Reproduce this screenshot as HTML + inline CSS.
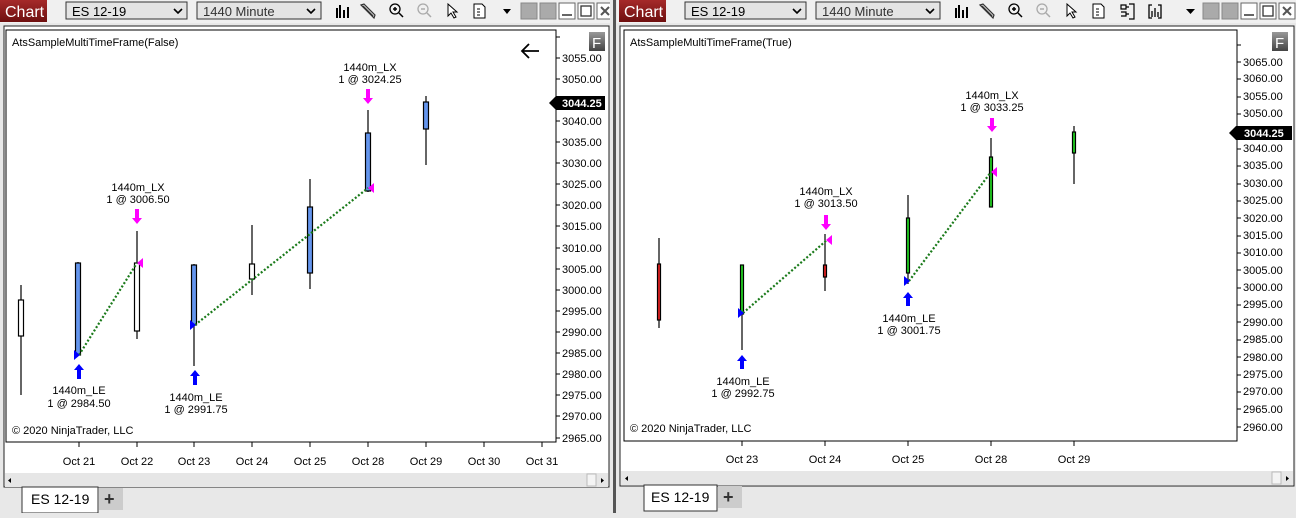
<!DOCTYPE html>
<html><head><meta charset="utf-8"><style>
body{margin:0;width:1296px;height:513px;overflow:hidden;background:#e8e8e8;font-family:"Liberation Sans",sans-serif}
svg text{font-family:"Liberation Sans",sans-serif}
</style></head><body>
<svg width="1296" height="513" viewBox="0 0 1296 513" xmlns="http://www.w3.org/2000/svg">
<defs>
<linearGradient id="red" x1="0" y1="0" x2="0" y2="1"><stop offset="0" stop-color="#a52a2a"/><stop offset="1" stop-color="#6e0f0f"/></linearGradient>
<linearGradient id="fb" x1="0" y1="0" x2="0" y2="1"><stop offset="0" stop-color="#999"/><stop offset="1" stop-color="#444"/></linearGradient>
<g id="tb">
 <rect x="0" y="0" width="47" height="22" fill="url(#red)"/>
 <text x="5" y="17" font-size="16" fill="#fff">Chart</text>
 <rect x="66" y="2" width="121" height="17" fill="#e4e4e4" stroke="#333"/>
 <text x="72" y="16" font-size="13" fill="#000">ES 12-19</text>
 <path d="M174 9l4 4 4-4" stroke="#000" stroke-width="1.6" fill="none"/>
 <rect x="197" y="2" width="124" height="17" fill="#e4e4e4" stroke="#333"/>
 <text x="203" y="16" font-size="13" fill="#333">1440 Minute</text>
 <path d="M307 9l4 4 4-4" stroke="#000" stroke-width="1.6" fill="none"/>
 <path d="M337 8v10M340 5v13M344 10v8M348 7v11" stroke="#000" stroke-width="2"/>
 <path d="M363 6l10 10M361 5l3 -1 11 11-1 3z" stroke="#333" stroke-width="1.2" fill="#ccc"/>
 <circle cx="395" cy="9" r="5" fill="none" stroke="#000" stroke-width="1.3"/><path d="M393 9h4M395 7v4M399 13l4 4" stroke="#000" stroke-width="1.5"/>
 <circle cx="423" cy="9" r="5" fill="none" stroke="#aaa" stroke-width="1.3"/><path d="M421 9h4M427 13l4 4" stroke="#aaa" stroke-width="1.5"/>
 <path d="M448 4v12l3-3 3 5 2-1-3-5h4z" fill="#fff" stroke="#000"/>
 <path d="M474 4h8l3 3v11h-11z" fill="#fff" stroke="#000"/><path d="M477 9h3M477 12h3M477 15h3" stroke="#000"/>
</g>
<g id="wb">
 <rect x="0" y="3" width="16" height="16" fill="#aaa" stroke="#888"/>
 <rect x="19" y="3" width="16" height="16" fill="#aaa" stroke="#888"/>
 <rect x="38" y="3" width="16" height="16" fill="#fff" stroke="#666"/><path d="M41 15h10" stroke="#333" stroke-width="1.5"/>
 <rect x="57" y="3" width="16" height="16" fill="#fff" stroke="#666"/><rect x="60" y="6" width="10" height="10" fill="none" stroke="#333" stroke-width="1.3"/>
 <rect x="76" y="3" width="16" height="16" fill="#fff" stroke="#666"/><path d="M80 7l8 8M88 7l-8 8" stroke="#555" stroke-width="2"/>
</g>
</defs>
<rect x="0" y="0" width="1296" height="23" fill="#f0f0f0"/>

<!-- LEFT WINDOW -->
<use href="#tb"/>
<path d="M503 9h8l-4 5z" fill="#000"/>
<use href="#wb" x="521"/>
<rect x="610" y="0" width="7" height="513" fill="#e8e8e8"/>
<rect x="613" y="0" width="3" height="513" fill="#555"/>
<rect x="4" y="26" width="605" height="461" fill="#fff" stroke="#222"/>
<rect x="6" y="30" width="550" height="412" fill="#fff" stroke="#000"/>
<text x="12" y="46" font-size="11">AtsSampleMultiTimeFrame(False)</text>
<text x="12" y="434" font-size="11">© 2020 NinjaTrader, LLC</text>
<path d="M522 51h17M529 44l-7 7 7 7" stroke="#000" stroke-width="1.8" fill="none"/>
<rect x="589" y="32" width="16" height="19" fill="url(#fb)"/><text x="592" y="48" font-size="15" fill="#fff">F</text>
<g font-size="11" fill="#000">
<text x="562" y="62">3055.00</text><text x="562" y="83">3050.00</text>
<text x="562" y="125">3040.00</text><text x="562" y="146">3035.00</text><text x="562" y="167">3030.00</text>
<text x="562" y="188">3025.00</text><text x="562" y="209">3020.00</text><text x="562" y="230">3015.00</text><text x="562" y="252">3010.00</text>
<text x="562" y="273">3005.00</text><text x="562" y="294">3000.00</text><text x="562" y="315">2995.00</text><text x="562" y="336">2990.00</text>
<text x="562" y="357">2985.00</text><text x="562" y="378">2980.00</text><text x="562" y="399">2975.00</text><text x="562" y="420">2970.00</text><text x="562" y="442">2965.00</text>
</g>
<path d="M556 37h4M556 58h4M556 79h4M556 100h4M556 121h4M556 142h4M556 163h4M556 184h4M556 205h4M556 226h4M556 248h4M556 269h4M556 290h4M556 311h4M556 332h4M556 353h4M556 374h4M556 395h4M556 416h4M556 438h4" stroke="#000"/>
<path d="M549 103l7-7h49v14h-49z" fill="#000"/><text x="562" y="107" font-size="11" fill="#fff" font-weight="bold">3044.25</text>
<path d="M79 442v5M137 442v5M194 442v5M252 442v5M310 442v5M368 442v5M426 442v5M484 442v5M542 442v5" stroke="#000"/>
<g font-size="11" text-anchor="middle"><text x="79" y="465">Oct 21</text><text x="137" y="465">Oct 22</text><text x="194" y="465">Oct 23</text><text x="252" y="465">Oct 24</text><text x="310" y="465">Oct 25</text><text x="368" y="465">Oct 28</text><text x="426" y="465">Oct 29</text><text x="484" y="465">Oct 30</text><text x="542" y="465">Oct 31</text></g>
<rect x="5" y="473" width="603" height="14" fill="#e6e6e6"/>
<path d="M11 478v5l-3-2.5z" fill="#000"/><path d="M601 478v5l3-2.5z" fill="#000"/>
<rect x="587" y="474" width="9" height="12" fill="#f4f4f4" stroke="#bbb"/>
<rect x="22" y="487" width="76" height="26" fill="#fff" stroke="#333"/><text x="31" y="504" font-size="14">ES 12-19</text>
<rect x="99" y="488" width="24" height="22" fill="#ccc"/><text x="104" y="505" font-size="18" font-weight="bold" fill="#333">+</text>
<g stroke="#000" stroke-width="1.2">
<path d="M21 285v110M78 262v94M137 231v108M194 264v102M252 225v70M310 179v110M368 110v82M426 96v69"/>
<rect x="18.5" y="300" width="5" height="36" fill="#fff"/>
<rect x="75.5" y="263" width="5" height="92" fill="#6495ed"/>
<rect x="134.5" y="263" width="5" height="68" fill="#fff"/>
<rect x="191.5" y="265" width="5" height="60" fill="#6495ed"/>
<rect x="249.5" y="264" width="5" height="15" fill="#fff"/>
<rect x="307.5" y="207" width="5" height="66" fill="#6495ed"/>
<rect x="365.5" y="133" width="5" height="58" fill="#6495ed"/>
<rect x="423.5" y="102" width="5" height="27" fill="#6495ed"/>
</g>
<path d="M79 355L137 263M195 325L368 188" stroke="#1a7a1a" stroke-width="2.2" stroke-dasharray="2 2"/>
<path d="M74 350l6 5-6 5zM190 320l6 5-6 5z" fill="#00f"/>
<path d="M143 258l-6 5 6 5zM374 183l-6 5 6 5z" fill="#f0f"/>
<path d="M79 364l-5 6h3v9h4v-9h3zM195 370l-5 6h3v9h4v-9h3z" fill="#00f"/>
<path d="M135 209v9h-3l5 6 5-6h-3v-9zM366 89v9h-3l5 6 5-6h-3v-9z" fill="#f0f"/>
<g font-size="11" text-anchor="middle">
<text x="79" y="394">1440m_LE</text><text x="79" y="407">1 @ 2984.50</text>
<text x="196" y="401">1440m_LE</text><text x="196" y="413">1 @ 2991.75</text>
<text x="138" y="191">1440m_LX</text><text x="138" y="203">1 @ 3006.50</text>
<text x="370" y="71">1440m_LX</text><text x="370" y="83">1 @ 3024.25</text>
</g>

<!-- RIGHT WINDOW -->
<g transform="translate(619,0)"><use href="#tb"/></g>
<path d="M1121 5h5v4h-5zM1121 12h5v4h-5M1126 7h3M1126 14h3M1129 4h5v15h-5" stroke="#000" stroke-width="1.2" fill="none"/>
<path d="M1152 5h-3v13h3M1158 5h3v13h-3M1152 11v6M1155 8v9M1158 12v5" stroke="#000" stroke-width="1.3" fill="none"/>
<path d="M1186 9h9l-4.5 5z" fill="#000"/>
<use href="#wb" x="1203"/>
<rect x="620" y="26" width="674" height="460" fill="#fff" stroke="#222"/>
<rect x="624" y="30" width="613" height="411" fill="#fff" stroke="#000"/>
<text x="630" y="46" font-size="11">AtsSampleMultiTimeFrame(True)</text>
<text x="630" y="432" font-size="11">© 2020 NinjaTrader, LLC</text>
<rect x="1272" y="32" width="16" height="19" fill="url(#fb)"/><text x="1275" y="48" font-size="15" fill="#fff">F</text>
<g font-size="11">
<text x="1243" y="66">3065.00</text><text x="1243" y="82">3060.00</text><text x="1243" y="100">3055.00</text><text x="1243" y="117">3050.00</text><text x="1243" y="135">3045.00</text>
<text x="1243" y="152">3040.00</text><text x="1243" y="169">3035.00</text><text x="1243" y="187">3030.00</text><text x="1243" y="204">3025.00</text><text x="1243" y="222">3020.00</text>
<text x="1243" y="239">3015.00</text><text x="1243" y="256">3010.00</text><text x="1243" y="274">3005.00</text><text x="1243" y="291">3000.00</text><text x="1243" y="308">2995.00</text>
<text x="1243" y="326">2990.00</text><text x="1243" y="343">2985.00</text><text x="1243" y="361">2980.00</text><text x="1243" y="378">2975.00</text><text x="1243" y="395">2970.00</text>
<text x="1243" y="413">2965.00</text><text x="1243" y="431">2960.00</text>
</g>
<path d="M1237 45h4M1237 62h4M1237 79h4M1237 97h4M1237 114h4M1237 132h4M1237 149h4M1237 166h4M1237 184h4M1237 201h4M1237 218h4M1237 236h4M1237 253h4M1237 270h4M1237 288h4M1237 305h4M1237 322h4M1237 340h4M1237 357h4M1237 375h4M1237 392h4M1237 409h4M1237 427h4" stroke="#000"/>
<path d="M1229 133l7-7h56v14h-56z" fill="#000"/><text x="1244" y="137" font-size="11" fill="#fff" font-weight="bold">3044.25</text>
<path d="M742 441v5M825 441v5M908 441v5M991 441v5M1074 441v5" stroke="#000"/>
<g font-size="11" text-anchor="middle"><text x="742" y="463">Oct 23</text><text x="825" y="463">Oct 24</text><text x="908" y="463">Oct 25</text><text x="991" y="463">Oct 28</text><text x="1074" y="463">Oct 29</text></g>
<rect x="621" y="471" width="672" height="14" fill="#e6e6e6"/>
<path d="M628 476v5l-3-2.5z" fill="#000"/><path d="M1286 476v5l3-2.5z" fill="#000"/>
<rect x="1272" y="472" width="9" height="12" fill="#f4f4f4" stroke="#bbb"/>
<rect x="644" y="485" width="73" height="26" fill="#fff" stroke="#333"/><text x="651" y="502" font-size="14">ES 12-19</text>
<rect x="718" y="486" width="24" height="22" fill="#ccc"/><text x="723" y="503" font-size="18" font-weight="bold" fill="#333">+</text>
<g stroke="#000" stroke-width="1.2">
<path d="M659 238v90M742 265v85M825 234v57M908 195v89M991 138v69M1074 126v58"/>
<rect x="657.5" y="264" width="3" height="56" fill="#d22"/>
<rect x="740.5" y="265" width="3" height="49" fill="#2c2"/>
<rect x="823.5" y="265" width="3" height="12" fill="#d22"/>
<rect x="906.5" y="218" width="3" height="55" fill="#2c2"/>
<rect x="989.5" y="157" width="3" height="50" fill="#2c2"/>
<rect x="1072.5" y="132" width="3" height="21" fill="#2c2"/>
</g>
<path d="M743 313L827 240M909 281L991 172" stroke="#1a7a1a" stroke-width="2.2" stroke-dasharray="2 2"/>
<path d="M738 308l6 5-6 5zM904 276l6 5-6 5z" fill="#00f"/>
<path d="M832 235l-6 5 6 5zM997 167l-6 5 6 5z" fill="#f0f"/>
<path d="M742 355l-5 6h3v8h4v-8h3zM908 292l-5 6h3v8h4v-8h3z" fill="#00f"/>
<path d="M824 215v9h-3l5 6 5-6h-3v-9zM990 118v8h-3l5 6 5-6h-3v-8z" fill="#f0f"/>
<g font-size="11" text-anchor="middle">
<text x="743" y="385">1440m_LE</text><text x="743" y="397">1 @ 2992.75</text>
<text x="909" y="322">1440m_LE</text><text x="909" y="334">1 @ 3001.75</text>
<text x="826" y="195">1440m_LX</text><text x="826" y="207">1 @ 3013.50</text>
<text x="992" y="99">1440m_LX</text><text x="992" y="111">1 @ 3033.25</text>
</g>
</svg>
</body></html>
